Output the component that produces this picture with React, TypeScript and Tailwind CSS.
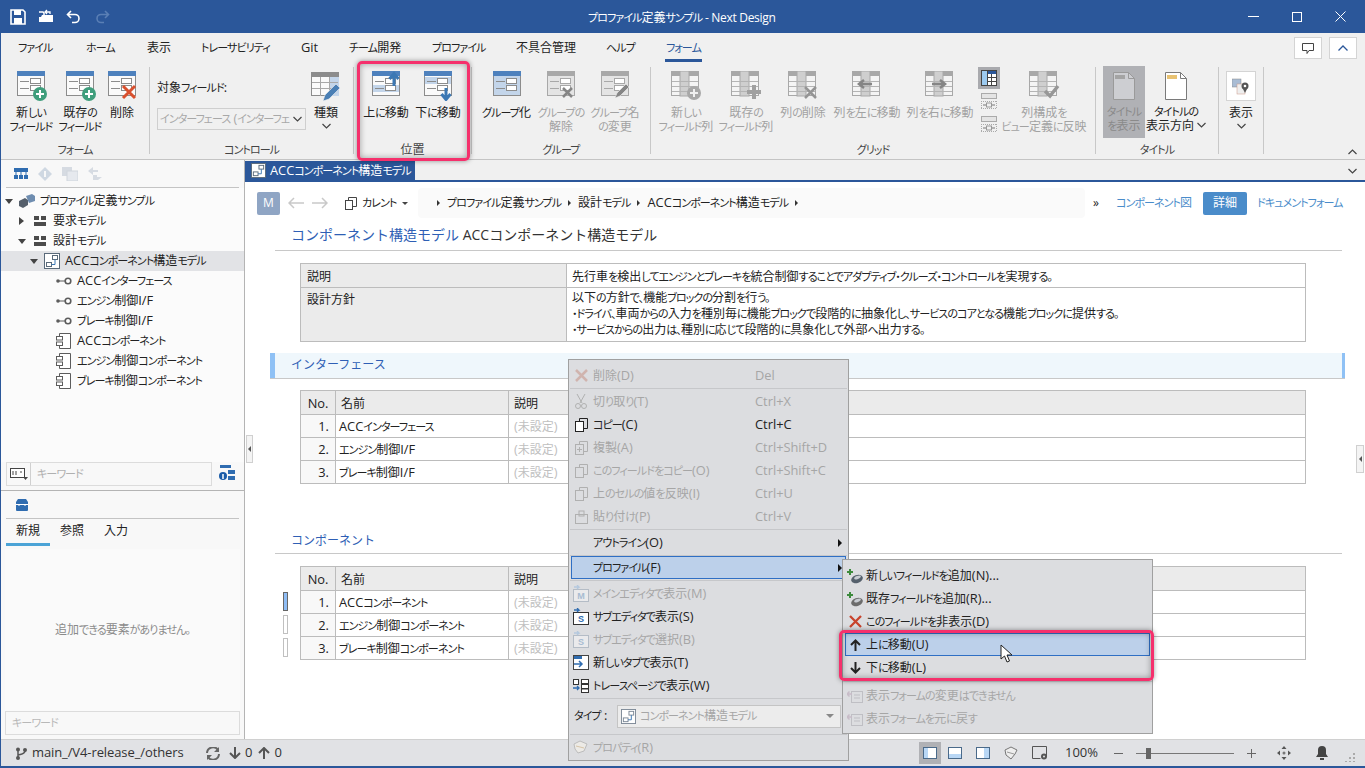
import type { ReactNode } from "react";

const GRAY = "#9a9a9a";

// かな・英数字の幅を Meiryo UI に寄せる
function j(s: string): ReactNode {
  return s.split(/([\u3040-\u30ff\u30fc・、。]+|[\x20-\x7e]+)/).map((part, i) => {
    if (!part) return null;
    if (/^[\x20-\x7e]+$/.test(part)) return <span key={i} className="[font-size:1.07em]">{part}</span>;
    if (/^[\u3040-\u30ff\u30fc・、。]+$/.test(part)) return <span key={i} className="[font-size:0.92em] tracking-[-0.085em]">{part}</span>;
    return <span key={i}>{part}</span>;
  });
}

function Form({ sel, off, head = "#4e81bd", children, band }: { sel?: boolean; off?: boolean; head?: string; children?: ReactNode; band?: "top" | "bottom" }) {
  const line = off ? "#a8a8a8" : "#8c8c8c";
  const fill = off ? "#e4e4e4" : sel ? "#c3d5ea" : "#fafafa";
  return (
    <svg width="32" height="30" viewBox="0 0 32 30">
      <rect x="2.5" y="0.5" width="27" height="24" fill={fill} stroke={line} />
      <rect x="2" y="0" width="28" height="5" fill={off ? "#a8a8a8" : head} />
      {band === "top" && <rect x="3" y="6" width="26" height="7" fill="#c3d5ea" />}
      {band === "bottom" && <rect x="3" y="14" width="26" height="7" fill="#c3d5ea" />}
      <path d="M5 10.5h9M5 17.5h9" stroke={line} />
      <rect x="15.5" y="7.5" width="10" height="5" fill="#fff" stroke={line} />
      <rect x="15.5" y="14.5" width="10" height="5" fill="#fff" stroke={line} />
      {children}
    </svg>
  );
}

const GreenPlus = () => (
  <g>
    <circle cx="25" cy="23" r="7" fill="#3f9e7c" />
    <path d="M25 19v8M21 23h8" stroke="#fff" strokeWidth="2" />
  </g>
);
const RedX = () => <path d="M17 15l12 12M29 15L17 27" stroke="#d9502e" strokeWidth="3" />;
const GrayX = () => <path d="M18 17l9 9M27 17l-9 9" stroke="#858585" strokeWidth="2.5" />;
const Pencil = ({ c = "#4a7fb5" }: { c?: string }) => <path d="M16 27l2-5 9-9 3 3-9 9z" fill={c} stroke="#f0f0f0" strokeWidth="0.6" />;

function Grid({ children, w = 32 }: { children?: ReactNode; w?: number }) {
  return (
    <svg width={w} height="30" viewBox="0 0 32 30">
      <rect x="1.5" y="0.5" width="27" height="24" fill="#f4f4f4" stroke="#a8a8a8" />
      <rect x="1" y="0" width="28" height="5" fill="#a8a8a8" />
      <rect x="10" y="0" width="9" height="25" fill="#cfcfcf" stroke="#a8a8a8" />
      <path d="M2 10.5h26M2 15.5h26M2 20.5h26" stroke="#b4b4b4" />
      {children}
    </svg>
  );
}

function TypeIcon() {
  return (
    <svg width="32" height="32" viewBox="0 0 32 32">
      <rect x="1.5" y="1.5" width="27" height="23" fill="#fafafa" stroke="#8c8c8c" />
      <rect x="1" y="1" width="28" height="5" fill="#8c8c8c" />
      <rect x="19" y="6" width="10" height="19" fill="#c3d5ea" />
      <path d="M2 11.5h26M2 17.5h26M10.5 6v19M19.5 6v19" stroke="#a8a8a8" />
      <path d="M13 30l2-6 11-11 4 4-11 11z" fill="#4a7fb5" stroke="#f0f0f0" strokeWidth="0.6" />
    </svg>
  );
}

function Page({ shown }: { shown?: boolean }) {
  return (
    <svg width="26" height="30" viewBox="0 0 26 30">
      <path d="M2.5 1.5h15l6 6v21h-21z" fill={shown ? "#cdced2" : "#fff"} stroke={shown ? GRAY : "#7a7a7a"} />
      <path d="M17.5 1.5v6h6" fill="none" stroke={shown ? GRAY : "#7a7a7a"} />
      <rect x="4" y="4" width="10" height="4" fill={shown ? "#a4a4a4" : "#e8c272"} />
    </svg>
  );
}

function Model({ size = 16, c = "#5a6a7a" }: { size?: number; c?: string }) {
  return (
    <svg className="shrink-0" width={size} height={size} viewBox="0 0 16 16">
      <rect x="0.5" y="0.5" width="15" height="15" fill="#fff" stroke={c} />
      <rect x="8.5" y="2.5" width="5" height="4" fill="none" stroke={c} />
      <rect x="2.5" y="9.5" width="5" height="4" fill="none" stroke={c} />
      <path d="M11 6.5v5H7.5" fill="none" stroke="#3c78b4" />
    </svg>
  );
}

function Folder() {
  return (
    <svg width="12" height="10" viewBox="0 0 12 10">
      <rect x="0" y="0" width="5" height="4" fill="#4b4b4b" />
      <rect x="7" y="0" width="5" height="4" fill="#4b4b4b" />
      <rect x="0" y="6" width="12" height="4" fill="#4b4b4b" />
    </svg>
  );
}

function Iface() {
  return (
    <svg width="16" height="8" viewBox="0 0 16 8">
      <circle cx="2" cy="4" r="1.8" fill="#5c5c5c" />
      <path d="M3 4h6" stroke="#5c5c5c" />
      <circle cx="12" cy="4" r="2.8" fill="#fff" stroke="#5c5c5c" strokeWidth="1.6" />
    </svg>
  );
}

function Comp() {
  return (
    <svg width="16" height="16" viewBox="0 0 16 16">
      <path d="M3.5 3.5v-3h11v15h-11v-3" fill="#fff" stroke="#5c5c5c" />
      <rect x="0.5" y="3.5" width="6" height="3.5" fill="#fff" stroke="#5c5c5c" />
      <rect x="0.5" y="9" width="6" height="3.5" fill="#fff" stroke="#5c5c5c" />
    </svg>
  );
}

function Caret({ open }: { open?: boolean }) {
  return open ? (
    <svg width="8" height="5" viewBox="0 0 8 5"><path d="M0 0h8L4 5z" fill="#444" /></svg>
  ) : (
    <svg width="5" height="8" viewBox="0 0 5 8"><path d="M0 0v8l5-4z" fill="#444" /></svg>
  );
}

const Chevron = ({ up }: { up?: boolean }) => (
  <svg width="9" height="6" viewBox="0 0 9 6">
    <path d={up ? "M0.5 5L4.5 1l4 4" : "M0.5 1l4 4 4-4"} fill="none" stroke="#444" strokeWidth="1.2" />
  </svg>
);

function RibbonButton({ icon, lines, w, off, chevron }: { icon: ReactNode; lines: string[]; w: string; off?: boolean; chevron?: boolean }) {
  return (
    <div className={`${w} flex flex-col items-center shrink-0 whitespace-nowrap ${off ? "text-[#a2a2a2]" : "text-[#222]"}`}>
      <div className="h-[35px] flex items-start justify-center">{icon}</div>
      {lines.map((l) => (
        <div key={l} className="leading-[13.5px]">{j(l)}</div>
      ))}
      {chevron && <div className="mt-[3px] leading-none"><Chevron /></div>}
    </div>
  );
}

function Group({ w, label, children }: { w: string; label: string; children: ReactNode }) {
  return (
    <div className={`${w} mt-[5px] h-[87px] flex flex-col shrink-0 border-r border-[#c8c8c8]`}>
      <div className="flex-1 flex">{children}</div>
      <div className="h-[14px] leading-[20px] text-center text-[#444]">{j(label)}</div>
    </div>
  );
}

function Ribbon() {
  return (
    <div className="h-[97px] flex border-b border-[#c4c4c4] box-content relative">
      <Group w="w-[149px]" label="フォーム">
        <div className="flex pl-[5px] pt-[4px]">
          <RibbonButton w="w-[50px]" lines={["新しい", "フィールド"]} icon={<Form><GreenPlus /></Form>} />
          <RibbonButton w="w-[48px]" lines={["既存の", "フィールド"]} icon={<Form><GreenPlus /></Form>} />
          <RibbonButton w="w-[36px]" lines={["削除"]} icon={<Form><RedX /></Form>} />
        </div>
      </Group>
      <Group w="w-[204px]" label="コントロール">
        <div className="flex pl-[7px] pt-[4px]">
          <div className="w-[149px] shrink-0">
            <div className="mt-[9px] leading-[14px] text-[#222]">{j("対象フィールド:")}</div>
            <div className="mt-[13px] h-[22px] w-[149px] border border-[#cfcfcf] flex items-center justify-between pl-[2px] pr-[3px] text-[#a8a8a8] whitespace-nowrap overflow-hidden">
              <span className="tracking-[-0.2px]">{j("インターフェース (インターフェ")}</span>
              <span className="shrink-0"><Chevron /></span>
            </div>
          </div>
          <RibbonButton w="w-[40px]" lines={["種類"]} chevron icon={<TypeIcon />} />
        </div>
      </Group>
      <Group w="w-[118px]" label="位置">
        <div className="flex pl-[6px] pt-[4px]">
          <RibbonButton w="w-[52px]" lines={["上に移動"]} icon={
            <Form band="bottom"><path d="M24 15V5M19.5 8L24 2.5 28.5 8" fill="none" stroke="#3c78b4" strokeWidth="3" /></Form>} />
          <RibbonButton w="w-[52px]" lines={["下に移動"]} icon={
            <Form band="top"><path d="M24 17v10M19.5 23l4.500 5.500 4.500-5.500" fill="none" stroke="#3c78b4" strokeWidth="3" /></Form>} />
        </div>
      </Group>
      <Group w="w-[179px]" label="グループ">
        <div className="flex pl-[7px] pt-[4px]">
          <RibbonButton w="w-[55px]" lines={["グループ化"]} icon={<Form sel />} />
          <RibbonButton w="w-[54px]" off lines={["グループの", "解除"]} icon={<Form off><GrayX /></Form>} />
          <RibbonButton w="w-[54px]" off lines={["グループ名", "の変更"]} icon={<Form off><Pencil c="#858585" /></Form>} />
        </div>
      </Group>
      <Group w="w-[445px]" label="グリッド">
        <div className="flex pl-[5px] pt-[4px]">
          <RibbonButton w="w-[60px]" off lines={["新しい", "フィールド列"]} icon={
            <Grid><circle cx="24" cy="22" r="7" fill="#a8a8a8" /><path d="M24 18v8M20 22h8" stroke="#f0f0f0" strokeWidth="2" /></Grid>} />
          <RibbonButton w="w-[60px]" off lines={["既存の", "フィールド列"]} icon={
            <Grid><path d="M24 14v14M17 21h14" stroke="#a0a0a0" strokeWidth="4" /></Grid>} />
          <RibbonButton w="w-[54px]" off lines={["列の削除"]} icon={<Grid><path d="M18 16l11 11M29 16L18 27" stroke="#959595" strokeWidth="2.5" /></Grid>} />
          <RibbonButton w="w-[74px]" off lines={["列を左に移動"]} icon={<Grid><path d="M21 13H9M13 9l-5 4 5 4" fill="none" stroke="#858585" strokeWidth="2.5" /></Grid>} />
          <RibbonButton w="w-[72px]" off lines={["列を右に移動"]} icon={<Grid><path d="M8 13h12M16 9l5 4-5 4" fill="none" stroke="#858585" strokeWidth="2.5" /></Grid>} />
          <div className="w-[26px] shrink-0 flex flex-col items-center">
            <div className="bg-[#a9aaae] w-[22px] h-[22px] -mt-[4px] flex items-center justify-center">
              <svg width="16" height="16" viewBox="0 0 16 16">
                <rect x="0.500" y="0.500" width="15" height="15" fill="#fff" stroke="#444" />
                <rect x="1" y="1" width="5" height="14" fill="#9ccaf0" />
                <rect x="6" y="1" width="9" height="3" fill="#2b579a" />
                <path d="M6.500 1v14M10.500 4v11M6 7.500h9M6 11.500h9" stroke="#444" />
              </svg>
            </div>
            {[0, 1].map((i) => (
              <svg key={i} className="mt-[4px] mb-[2px]" width="16" height="17" viewBox="0 0 16 17">
                <rect x="0.500" y="0.500" width="15" height="5" fill="#e4e4e4" stroke="#aaa" />
                <path d="M0.500 8v8M15.500 8v8M0 8.500h16M0 15.500h16" stroke="#aaa" strokeDasharray="1 1" />
                <rect x="5.500" y="10" width="5" height="4" fill="none" stroke="#999" />
                <path d="M2 12h3M11 12h3" stroke="#777" />
              </svg>
            ))}
          </div>
          <RibbonButton w="w-[84px]" off lines={["列構成を", "ビュー定義に反映"]} icon={
            <Grid><path d="M17 20l5 5 8-10" fill="none" stroke="#979797" strokeWidth="3.500" /></Grid>} />
        </div>
      </Group>
      <Group w="w-[123px]" label="タイトル">
        <div className="flex pl-[7px] -mt-[1px]">
          <div className="w-[42px] h-[72px] bg-[#b0b1b5] flex flex-col items-center shrink-0 text-[#8a8a8a] whitespace-nowrap">
            <div className="h-[39px] pt-[5px]"><Page shown /></div>
            <div className="leading-[13.5px]">{j("タイトル")}</div>
            <div className="leading-[13.5px]">{j("を表示")}</div>
          </div>
          <div className="w-[62px] flex flex-col items-center shrink-0 text-[#222] whitespace-nowrap">
            <div className="h-[39px] pt-[5px]"><Page /></div>
            <div className="leading-[13.5px]">{j("タイトルの")}</div>
            <div className="leading-[13.5px] flex items-center gap-[3px]">{j("表示方向")} <Chevron /></div>
          </div>
        </div>
      </Group>
      <Group w="w-[45px]" label="">
        <div className="flex flex-col items-center w-full pt-[4px] text-[#222]">
          <div className="w-[30px] h-[30px] bg-white border border-[#d4d4d4] flex items-center justify-center">
            <svg width="18" height="18" viewBox="0 0 18 18">
              <rect x="0" y="2" width="9" height="8" fill="#a9bcd4" stroke="#888" strokeWidth="0.500" />
              <rect x="5" y="7" width="8" height="10" fill="#eee" stroke="#c98" strokeWidth="0.500" />
              <circle cx="13" cy="9" r="3.500" fill="#555" />
              <circle cx="13" cy="9" r="1.300" fill="#fff" />
              <path d="M11 12l2 4 2-4z" fill="#555" />
            </svg>
          </div>
          <div className="mt-[5px] leading-[13.5px]">{j("表示")}</div>
          <div className="mt-[3px] leading-none"><Chevron /></div>
        </div>
      </Group>
      <div className="ml-auto mr-[8px] self-end mb-[4px]"><Chevron up /></div>
    </div>
  );
}

const tabs = [
  { t: "ファイル", w: "w-[68px]" },
  { t: "ホーム", w: "w-[61px]" },
  { t: "表示", w: "w-[54px]" },
  { t: "トレーサビリティ", w: "w-[100px]" },
  { t: "Git", w: "w-[48px]" },
  { t: "チーム開発", w: "w-[83px]" },
  { t: "プロファイル", w: "w-[84px]" },
  { t: "不具合管理", w: "w-[90px]" },
  { t: "ヘルプ", w: "w-[59px]" },
];

function TabRow() {
  return (
    <div className="h-[29px] flex justify-between pl-[17px] pr-[8px]">
      <div className="flex text-[#222]">
        {tabs.map(({ t, w }) => (
          <div key={t} className={`${w} leading-[29px] whitespace-nowrap`}>{j(t)}</div>
        ))}
        <div className="h-[29px] leading-[29px] border-b-[3px] border-[#2b579a] text-[#2b579a] px-[1px]">{j("フォーム")}</div>
      </div>
      <div className="flex gap-[7px] pt-[4px]">
        <div className="w-[28px] h-[22px] bg-white border border-[#d4d4d4] flex items-center justify-center">
          <svg width="14" height="13" viewBox="0 0 14 13"><path d="M1.500 1.500h11v7H8l-2 3v-3H1.500z" fill="none" stroke="#444" /></svg>
        </div>
        <div className="w-[28px] h-[22px] bg-white border border-[#d4d4d4] flex items-center justify-center">
          <svg width="10" height="6" viewBox="0 0 10 6"><path d="M0.500 5.500L5 1l4.500 4.500" fill="none" stroke="#2b579a" strokeWidth="1.300" /></svg>
        </div>
      </div>
    </div>
  );
}

function TitleBar() {
  return (
    <div className="h-[33px] bg-[#2b579a] flex items-center justify-between text-white relative shrink-0">
      <div className="flex items-center gap-[12px] pl-[9px]">
        <svg width="16" height="16" viewBox="0 0 16 16">
          <path d="M1 1h12l2 2v12H1z" fill="none" stroke="#fff" strokeWidth="1.600" />
          <rect x="4" y="1" width="7" height="5" fill="#fff" />
          <rect x="4" y="9" width="8" height="6" fill="#fff" />
        </svg>
        <svg width="16" height="16" viewBox="0 0 16 16">
          <path d="M1 8h2l1-2h11v7H1z" fill="#fff" />
          <path d="M1 3h4l1 1v3" fill="none" stroke="#fff" strokeWidth="1.500" />
          <path d="M9 1l-2 2 2 2M7 3h5v2" fill="none" stroke="#fff" strokeWidth="1.300" />
        </svg>
        <svg width="16" height="14" viewBox="0 0 16 14">
          <path d="M5 1L1.500 4.500 5 8M2 4.500h7a4 4 0 0 1 0 8H6" fill="none" stroke="#fff" strokeWidth="1.600" />
        </svg>
        <svg width="16" height="14" viewBox="0 0 16 14">
          <path d="M11 1l3.500 3.500L11 8M14 4.500H7a4 4 0 0 0 0 8h3" fill="none" stroke="#5a7fb5" strokeWidth="1.600" />
        </svg>
      </div>
      <div className="absolute left-[587px] top-0 leading-[35px] whitespace-nowrap">
        {j("プロファイル定義サンプル")}<span className="tracking-[-0.3px]"> - Next Design</span>
      </div>
      <div className="flex items-center gap-[33px] pr-[19px]">
        <div className="w-[11px] h-[1px] bg-white" />
        <div className="w-[10px] h-[10px] border border-white" />
        <svg width="11" height="11" viewBox="0 0 11 11"><path d="M0.500 0.500l10 10M10.500 0.500l-10 10" stroke="#fff" /></svg>
      </div>
    </div>
  );
}

function TreeRow({ pad, icon, caret, label, sel }: { pad: string; icon: ReactNode; caret?: "open" | "closed"; label: string; sel?: boolean }) {
  return (
    <div className={`h-[20px] flex items-center whitespace-nowrap text-[#222] ${pad} ${sel ? "bg-[#e2e3e6]" : ""}`}>
      <div className="w-[13px] shrink-0 flex justify-center">{caret && <Caret open={caret === "open"} />}</div>
      <div className="w-[24px] shrink-0 flex justify-center">{icon}</div>
      <span className="pl-[1px]">{j(label)}</span>
    </div>
  );
}

function LeftPanel() {
  return (
    <div className="w-[244px] shrink-0 border-r border-[#b4b4b4] bg-[#f8f8f8] flex flex-col">
      <div className="h-[28px] mx-[5px] border-b border-[#c4c4c4] flex items-center gap-[10px] pl-[8px]">
        <svg width="14" height="12" viewBox="0 0 14 12">
          <rect x="0" y="0" width="14" height="4" fill="#2f6cb0" /><path d="M2 4v3M7 4v3M12 4v3" stroke="#2f6cb0" /><rect x="0" y="7" width="4" height="4" fill="#2f6cb0" /><rect x="5" y="7" width="4" height="4" fill="#2f6cb0" /><rect x="10" y="7" width="4" height="4" fill="#2f6cb0" />
        </svg>
        <svg width="14" height="14" viewBox="0 0 14 14"><path d="M7 0l7 7-7 7-7-7z" fill="#cfd8e2" /><path d="M6 4h2v6H6z" fill="#f8f8f8" /></svg>
        <svg width="16" height="14" viewBox="0 0 16 14"><rect x="0" y="0" width="10" height="9" fill="#d6dbe2" /><rect x="5" y="4" width="11" height="10" fill="#e6e9ee" stroke="#cfd5dc" /></svg>
        <svg width="14" height="14" viewBox="0 0 14 14"><path d="M0 4l5-4v3h5v2H5v3zM14 10H9V8H5v5h5z" fill="#d6dbe2" /></svg>
      </div>
      <div className="h-[274px] pt-[3px] bg-[#fbfbfb]">
        <TreeRow pad="pl-[1px]" caret="open" label="プロファイル定義サンプル" icon={
          <svg width="16" height="14" viewBox="0 0 16 14"><path d="M0 7l6-3 3 2v5l-5 3-4-2z" fill="#56606c" /><path d="M7 2l6-2 3 2v5l-6 2z" fill="#6f8db0" /></svg>} />
        <TreeRow pad="pl-[14px]" caret="closed" label="要求モデル" icon={<Folder />} />
        <TreeRow pad="pl-[14px]" caret="open" label="設計モデル" icon={<Folder />} />
        <TreeRow pad="pl-[26px]" caret="open" label="ACCコンポーネント構造モデル" sel icon={<Model />} />
        {["ACCインターフェース", "エンジン制御I/F", "ブレーキ制御I/F"].map((l) => (
          <TreeRow key={l} pad="pl-[38px]" label={l} icon={<Iface />} />
        ))}
        {["ACCコンポーネント", "エンジン制御コンポーネント", "ブレーキ制御コンポーネント"].map((l) => (
          <TreeRow key={l} pad="pl-[38px]" label={l} icon={<Comp />} />
        ))}
      </div>
      <div className="h-[28px] flex items-start pl-[5px] pr-[9px] border-b border-[#b4b4b4] box-content">
        <div className="w-[206px] h-[24px] border border-[#dcdcdc] flex items-center bg-[#f8f8f8]">
          <div className="w-[24px] h-full border-r border-[#d0d0d0] flex items-center justify-center">
            <svg width="18" height="12" viewBox="0 0 18 12"><rect x="0.500" y="0.500" width="14" height="9" fill="#fff" stroke="#444" /><path d="M3 3v4M6 3v4M10 4h2" stroke="#444" /><path d="M13 9h5l-2.500 3z" fill="#444" /></svg>
          </div>
          <span className="pl-[6px] text-[#b0b0b0]">{j("キーワード")}</span>
        </div>
        <div className="ml-[7px] mt-[3px]">
          <svg width="16" height="16" viewBox="0 0 16 16"><rect x="1" y="0" width="11" height="3" fill="#2f6cb0" /><rect x="9" y="5" width="7" height="4" fill="#2f6cb0" /><rect x="9" y="11" width="7" height="4" fill="#2f6cb0" /><circle cx="4" cy="11" r="4" fill="#1a5ca8" /><path d="M4 9v5" stroke="#fff" strokeWidth="1.500" /></svg>
        </div>
      </div>
      <div className="h-[28px] mx-[5px] border-b border-[#c4c4c4] flex items-center pl-[9px]">
        <svg width="14" height="13" viewBox="0 0 14 13"><path d="M1 4l2-3h8l2 3v8a1 1 0 0 1-1 1H2a1 1 0 0 1-1-1z" fill="#2f6cb0" /><path d="M1 6.500h12" stroke="#fff" /><path d="M4 6v2M10 6v2" stroke="#fff" /></svg>
      </div>
      <div className="h-[27px] flex pl-[5px] text-[#222]">
        <div className="w-[44px] text-center leading-[24px] border-b-[3px] border-[#4ba3d6]">新規</div>
        <div className="w-[44px] text-center leading-[24px]">参照</div>
        <div className="w-[44px] text-center leading-[24px]">入力</div>
      </div>
      <div className="h-[162px] mt-[3px] mx-[4px] bg-[#fafafa] flex items-center justify-center text-[#8a8a8a]">{j("追加できる要素がありません。")}</div>
      <div className="h-[24px] mx-[4px] border border-[#dcdcdc] flex items-center pl-[6px] text-[#b8b8b8]">{j("キーワード")}</div>
    </div>
  );
}

function FieldTable({ rows, markers }: { rows: string[]; markers?: boolean }) {
  return (
    <div className="relative mx-[55px] mt-[12px]">
      {markers && (
        <div className="absolute -left-[17px] top-[26px] flex flex-col gap-[4px]">
          <div className="w-[5px] h-[19px] bg-[#8fbdf5] border border-[#666]" />
          <div className="w-[5px] h-[19px] bg-white border border-[#c0c0c0]" />
          <div className="w-[5px] h-[19px] bg-white border border-[#c0c0c0]" />
        </div>
      )}
      <table className="w-[1006px] table-fixed border-collapse text-[#222]">
        <thead>
          <tr className="h-[24px] bg-[#ebebeb]">
            <th className="w-[35px] border border-[#bcbcbc] font-normal pt-[2px]">{j("No.")}</th>
            <th className="w-[173px] border border-[#bcbcbc] font-normal text-left pl-[5px] pt-[2px]">名前</th>
            <th className="border border-[#bcbcbc] font-normal text-left pl-[5px] pt-[2px]">説明</th>
          </tr>
        </thead>
        <tbody>
          {rows.map((r, i) => (
            <tr key={r} className="h-[23px]">
              <td className="border border-[#bcbcbc] text-right pr-[6px] pt-[2px] bg-[#f8f8f8]">{j(`${i + 1}.`)}</td>
              <td className="border border-[#bcbcbc] pl-[3px] pt-[2px] whitespace-nowrap">{j(r)}</td>
              <td className="border border-[#bcbcbc] pl-[5px] pt-[2px] text-[#c0c0c0]">{j("(未設定)")}</td>
            </tr>
          ))}
        </tbody>
      </table>
    </div>
  );
}

function MainArea() {
  return (
    <div className="flex-1 flex flex-col min-w-0">
      <div className="h-[20px] flex justify-between shrink-0 bg-[#f0f0f0]">
        <div className="w-[170px] mt-[1px] bg-[#2b579a] text-white flex items-center pl-[6px] gap-[4px] whitespace-nowrap">
          <Model size={15} />
          <span>{j("ACCコンポーネント構造モデル")}</span>
        </div>
        <div className="pr-[8px] pt-[8px]"><Chevron /></div>
      </div>
      <div className="h-[2px] bg-[#2b579a] shrink-0" />
      <div className="flex-1 bg-white flex flex-col">
        <div className="flex items-center h-[36px] mt-[3px] pl-[12px] text-[#222] whitespace-nowrap">
          <div className="w-[23px] h-[23px] rounded-[2px] bg-[#8fa5c4] text-white flex items-center justify-center">M</div>
          <svg className="ml-[8px]" width="16" height="12" viewBox="0 0 16 12"><path d="M6 1L1 6l5 5M1 6h15" fill="none" stroke="#c9c9c9" strokeWidth="1.500" /></svg>
          <svg className="ml-[8px]" width="16" height="12" viewBox="0 0 16 12"><path d="M10 1l5 5-5 5M15 6H0" fill="none" stroke="#c9c9c9" strokeWidth="1.500" /></svg>
          <svg className="ml-[17px]" width="12" height="13" viewBox="0 0 12 13"><rect x="0.500" y="3.500" width="7" height="9" fill="#fff" stroke="#444" /><path d="M3.500 3V0.500h8v9H8" fill="none" stroke="#444" /></svg>
          <span className="ml-[5px] w-[35px]">{j("カレント")}</span>
          <svg className="ml-[5px]" width="6" height="3" viewBox="0 0 6 3"><path d="M0 0h6L3 3z" fill="#444" /></svg>
          <div className="ml-[10px] w-[667px] h-[30px] rounded-[4px] bg-[#fafafa] flex items-center pl-[19px] gap-[7px]">
            {["プロファイル定義サンプル", "設計モデル", "ACCコンポーネント構造モデル", ""].map((t, i) => (
              <span key={i} className="flex items-center gap-[7px]">
                <svg width="3" height="6" viewBox="0 0 3 6"><path d="M0 0v6l3-3z" fill="#333" /></svg>
                <span>{j(t)}</span>
              </span>
            ))}
          </div>
          <span className="ml-[8px] w-[23px]">»</span>
          <span className="text-[#4a8cca] w-[87px]">{j("コンポーネント図")}</span>
          <div className="w-[44px] h-[23px] rounded-[2px] bg-[#4a8cca] text-white flex items-center justify-center">詳細</div>
          <span className="ml-[10px] text-[#4a8cca]">{j("ドキュメントフォーム")}</span>
        </div>
        <div className="ml-[30px] h-[30px] w-[1067px] border-b border-[#c8c8c8] text-[14px] leading-[28px] pl-[16px] text-[#333] whitespace-nowrap [font-feature-settings:normal]">
          <span className="text-[#2f5fb5]">コンポーネント構造モデル</span> ACCコンポーネント構造モデル
        </div>
        <table className="ml-[55px] mt-[12px] w-[1006px] table-fixed border-collapse text-[#222]">
          <tbody>
            <tr className="h-[24px]">
              <td className="w-[266px] border border-[#bcbcbc] bg-[#ebebeb] pl-[6px] pt-[2px]">説明</td>
              <td className="border border-[#bcbcbc] pl-[5px] pt-[2px]">{j("先行車を検出してエンジンとブレーキを統合制御することでアダプティブ・クルーズ・コントロールを実現する。")}</td>
            </tr>
            <tr className="h-[54px]">
              <td className="border border-[#bcbcbc] bg-[#ebebeb] pl-[6px] align-top pt-[3px]">設計方針</td>
              <td className="border border-[#bcbcbc] pl-[5px] pt-[2px] leading-[16px] align-top">
                <div>{j("以下の方針で、機能ブロックの分割を行う。")}</div>
                <div>{j("・ドライバ、車両からの入力を種別毎に機能ブロックで段階的に抽象化し、サービスのコアとなる機能ブロックに提供する。")}</div>
                <div>{j("・サービスからの出力は、種別に応じて段階的に具象化して外部へ出力する。")}</div>
              </td>
            </tr>
          </tbody>
        </table>
        <div className="ml-[25px] mt-[11px] w-[1075px] h-[25px] bg-[#eff7fc] border-l-[5px] border-r-[3px] border-[#8fc1f5] shadow-[0_1px_0_#c8c8c8] leading-[24px] pl-[16px] text-[#2f5fb5] [font-feature-settings:normal]">インターフェース</div>
        <FieldTable rows={["ACCインターフェース", "エンジン制御I/F", "ブレーキ制御I/F"]} />
        <div className="ml-[30px] mt-[42px] h-[28px] w-[1067px] border-b border-[#c8c8c8] leading-[30px] pl-[16px] text-[#2f5fb5] [font-feature-settings:normal]">コンポーネント</div>
        <FieldTable markers rows={["ACCコンポーネント", "エンジン制御コンポーネント", "ブレーキ制御コンポーネント"]} />
      </div>
    </div>
  );
}

function StatusBar() {
  return (
    <div className="h-[27px] shrink-0 bg-[#e1e2e5] border-t border-[#d0d0d0] flex items-center text-[#333] whitespace-nowrap relative">
      <svg className="ml-[14px]" width="12" height="13" viewBox="0 0 12 13"><circle cx="3" cy="2.500" r="2" fill="#555" /><circle cx="3" cy="11" r="2" fill="#555" /><circle cx="10" cy="3" r="2" fill="#555" /><path d="M3 3v8M10 4c0 3-4 3-7 4" fill="none" stroke="#555" strokeWidth="1.500" /></svg>
      <span className="ml-[5px] text-[13px] w-[174px] tracking-[-0.1px]">main_/V4-release_/others</span>
      <svg width="14" height="13" viewBox="0 0 14 13"><path d="M1 6a6 6 0 0 1 11-3M13 7A6 6 0 0 1 2 10" fill="none" stroke="#666" strokeWidth="2" /><path d="M13 0v5H8zM1 13V8h5z" fill="#666" /></svg>
      <svg className="ml-[9px]" width="12" height="12" viewBox="0 0 12 12"><path d="M6 0v10M1 6l5 5 5-5" fill="none" stroke="#555" strokeWidth="2" /></svg>
      <span className="ml-[4px] text-[13px]">0</span>
      <svg className="ml-[6px]" width="12" height="12" viewBox="0 0 12 12"><path d="M6 12V2M1 6l5-5 5 5" fill="none" stroke="#555" strokeWidth="2" /></svg>
      <span className="ml-[4px] text-[13px]">0</span>
      <div className="ml-auto flex items-center pr-[9px]">
        <div className="w-[22px] h-[22px] bg-[#b0b1b5] flex items-center justify-center">
          <svg width="14" height="12" viewBox="0 0 14 12"><rect x="0.500" y="0.500" width="13" height="11" fill="#fff" stroke="#4a6a8a" /><rect x="1" y="1" width="4" height="10" fill="#b9d7f5" /></svg>
        </div>
        <svg className="ml-[7px]" width="14" height="12" viewBox="0 0 14 12"><rect x="0.500" y="0.500" width="13" height="11" fill="#fff" stroke="#4a6a8a" /><rect x="1" y="7" width="12" height="4" fill="#b9d7f5" /></svg>
        <svg className="ml-[14px]" width="14" height="12" viewBox="0 0 14 12"><rect x="0.500" y="0.500" width="13" height="11" fill="#fff" stroke="#4a6a8a" /><rect x="8" y="1" width="5" height="10" fill="#b9d7f5" /></svg>
        <svg className="ml-[13px]" width="16" height="16" viewBox="0 0 16 16"><path d="M2 5l6-3 6 3-2 4-4 5-5-4z" fill="#eee" stroke="#777" /><path d="M4 7l7 2" stroke="#999" /></svg>
        <svg className="ml-[13px]" width="16" height="14" viewBox="0 0 16 14"><path d="M0.500 0.500h14v10M0.500 0.500v12h8" fill="none" stroke="#555" /><circle cx="12" cy="10.500" r="3" fill="#555" /><circle cx="12" cy="10.500" r="1" fill="#e1e2e5" /></svg>
        <span className="ml-[17px] w-[42px] text-[13px]">100%</span>
        <div className="w-[9px] h-[1px] bg-[#666] ml-[7px]" />
        <div className="ml-[13px] w-[98px] h-[1px] bg-[#777] relative">
          <div className="absolute left-[10px] -top-[5px] w-[5px] h-[11px] bg-[#666]" />
        </div>
        <svg className="ml-[13px]" width="9" height="9" viewBox="0 0 9 9"><path d="M4.500 0v9M0 4.500h9" stroke="#666" /></svg>
        <svg className="ml-[21px]" width="14" height="14" viewBox="0 0 14 14"><path d="M7 0l2.500 3h-5zM7 14l-2.500-3h5zM0 7l3-2.500v5zM14 7l-3 2.500v-5z" fill="#555" /><circle cx="7" cy="7" r="1.500" fill="#777" /></svg>
        <svg className="ml-[25px]" width="12" height="14" viewBox="0 0 12 14"><path d="M6 0a4 4 0 0 1 4 4v4l2 3H0l2-3V4a4 4 0 0 1 4-4z" fill="#444" /><rect x="4" y="12" width="4" height="2" fill="#444" /></svg>
        <svg className="ml-[16px] mt-[8px]" width="12" height="10" viewBox="0 0 12 10"><path d="M9 1h2v2H9zM5 5h2v2H5zM9 5h2v2H9zM1 9h2v1H1zM5 9h2v1H5zM9 9h2v1H9z" fill="#aaa" /></svg>
      </div>
    </div>
  );
}

function MenuRow({ icon, label, keys, off, arrow, active, labelPad = "pl-[22px]" }: { icon?: ReactNode; label: string; keys?: string; off?: boolean; arrow?: boolean; active?: boolean; labelPad?: string }) {
  return (
    <div className={`h-[23px] mx-[2px] flex items-center relative whitespace-nowrap ${off ? "text-[#a6a6a6]" : "text-[#222]"} ${active ? "bg-[#bcd0ea] outline-1 -outline-offset-1 outline-[#2f6fc4]" : ""}`}>
      {icon && <div className="absolute left-0 w-[20px] flex justify-center">{icon}</div>}
      <span className={`${labelPad} w-[184px]`}>{j(label)}</span>
      {keys && <span>{j(keys)}</span>}
      {arrow && <svg className="absolute right-[4px]" width="4" height="8" viewBox="0 0 4 8"><path d="M0 0v8l4-4z" fill="#111" /></svg>}
    </div>
  );
}

const MenuSep = ({ h = "h-[3px]" }: { h?: string }) => (
  <div className={`${h} flex items-center mx-[1px]`}><div className="w-full h-[1px] bg-[#c6c7ca]" /></div>
);

const Copy = ({ c = "#b0b0b0", plus }: { c?: string; plus?: boolean }) => (
  <svg width="13" height="14" viewBox="0 0 13 14">
    <rect x="0.500" y="3.500" width="8" height="10" fill={c === "#222" ? "#fff" : "none"} stroke={c} />
    <path d="M4.500 3V0.500h8v10H9" fill="none" stroke={c} />
    {plus && <path d="M4.500 6v5M2 8.500h5" stroke={c} />}
  </svg>
);

const Jump = ({ ch, off }: { ch: string; off?: boolean }) => (
  <svg width="18" height="17" viewBox="0 0 18 17">
    <rect x="1.500" y="4.500" width="15" height="12" fill="#fff" fillOpacity={off ? 0.4 : 1} stroke={off ? "#b4bcc6" : "#333"} />
    <path d="M2 2h5l-2-2M7 2L5 4" fill="none" stroke={off ? "#b4c8de" : "#2f6cb0"} strokeWidth="1.300" />
    <text x="9" y="14" fontSize="9" fontWeight="700" textAnchor="middle" fill={off ? "#a8bcd2" : "#2f6cb0"} fontFamily="'Liberation Sans',sans-serif">{ch}</text>
  </svg>
);

const Bolt = ({ tone = "#55606c" }: { tone?: string }) => (
  <svg width="18" height="16" viewBox="0 0 18 16">
    <path d="M4 1v6M1 4h6" stroke="#3c8a3c" strokeWidth="2" />
    <ellipse cx="11" cy="11" rx="6" ry="4" transform="rotate(-20 11 11)" fill={tone} />
    <ellipse cx="11.500" cy="9.500" rx="3.500" ry="1.500" transform="rotate(-20 11.500 9.500)" fill="#c8ccd2" />
  </svg>
);

const FormBack = () => (
  <svg width="16" height="14" viewBox="0 0 16 14">
    <rect x="4.500" y="2.500" width="11" height="11" fill="none" stroke="#bfbfc4" />
    <path d="M7 6h6M7 9h6" stroke="#bfbfc4" />
    <path d="M0 5h5M2.500 2.500L0 5l2.500 2.500" fill="none" stroke="#c8bcc8" strokeWidth="1.500" />
  </svg>
);

function ContextMenu() {
  return (
    <div className="absolute left-[567px] top-[359px] w-[281px] h-[402px] bg-[#dcdde0] border border-[#a0a0a0] pt-[4px]">
      <MenuRow off label="削除(D)" keys="Del" icon={<svg width="13" height="13" viewBox="0 0 13 13"><path d="M1 1l11 11M12 1L1 12" stroke="#d0b4ae" strokeWidth="2.500" /></svg>} />
      <MenuSep />
      <MenuRow off label="切り取り(T)" keys="Ctrl+X" icon={<svg width="12" height="15" viewBox="0 0 12 15"><path d="M2 0l5 9M10 0L5 9" stroke="#b0b0b0" /><circle cx="3" cy="12" r="2.500" fill="none" stroke="#b0b0b0" /><circle cx="9" cy="12" r="2.500" fill="none" stroke="#b0b0b0" /></svg>} />
      <MenuRow label="コピー(C)" keys="Ctrl+C" icon={<Copy c="#222" />} />
      <MenuRow off label="複製(A)" keys="Ctrl+Shift+D" icon={<Copy plus />} />
      <MenuRow off label="このフィールドをコピー(O)" keys="Ctrl+Shift+C" icon={<Copy />} />
      <MenuRow off label="上のセルの値を反映(I)" keys="Ctrl+U" icon={<Copy />} />
      <MenuRow off label="貼り付け(P)" keys="Ctrl+V" icon={<svg width="13" height="14" viewBox="0 0 13 14"><rect x="0.500" y="4.500" width="12" height="9" fill="none" stroke="#b0b0b0" /><rect x="4" y="1" width="5" height="5" fill="none" stroke="#b0b0b0" /></svg>} />
      <MenuSep />
      <MenuRow label="アウトライン(O)" arrow />
      <MenuSep h="h-[2px]" />
      <MenuRow label="プロファイル(F)" arrow active />
      <MenuSep />
      <MenuRow off label="メインエディタで表示(M)" icon={<Jump ch="M" off />} />
      <MenuRow label="サブエディタで表示(S)" icon={<Jump ch="S" />} />
      <MenuRow off label="サブエディタで選択(B)" icon={<Jump ch="S" off />} />
      <MenuRow label="新しいタブで表示(T)" icon={
        <svg width="16" height="15" viewBox="0 0 16 15"><rect x="0.500" y="0.500" width="15" height="14" fill="#fff" stroke="#444" /><rect x="1" y="1" width="8" height="3" fill="#2f6cb0" /><path d="M1 9h8M6 6l3 3-3 3" fill="none" stroke="#2f6cb0" strokeWidth="1.500" /></svg>} />
      <MenuRow label="トレースページで表示(W)" icon={
        <svg width="16" height="14" viewBox="0 0 16 14"><rect x="0.500" y="0.500" width="5" height="5" fill="#fff" stroke="#333" /><rect x="8.500" y="0.500" width="7" height="4" fill="#fff" stroke="#333" /><rect x="8.500" y="5.500" width="7" height="4" fill="#fff" stroke="#333" /><rect x="8.500" y="10" width="7" height="3.500" fill="#fff" stroke="#333" /><path d="M0 9h6M4 7l2 2-2 2" fill="none" stroke="#2f6cb0" strokeWidth="1.300" /></svg>} />
      <MenuSep h="h-[2px]" />
      <div className="h-[34px] flex items-center pl-[5px] text-[#222]">
        <span className="w-[43px] whitespace-nowrap">{j("タイプ :")}</span>
        <div className="w-[224px] h-[23px] bg-[#ececec] border border-[#c4c4c4] flex items-center pl-[3px] text-[#a6a6a6] whitespace-nowrap">
          <Model size={15} c="#7c8896" />
          <span className="ml-[4px] flex-1">{j("コンポーネント構造モデル")}</span>
          <svg className="mr-[6px]" width="8" height="4" viewBox="0 0 8 4"><path d="M0 0h8L4 4z" fill="#888" /></svg>
        </div>
      </div>
      <MenuSep />
      <MenuRow off label="プロパティ(R)" icon={<svg width="16" height="15" viewBox="0 0 16 15"><path d="M1 4l6-3 7 3-3 7-6 2-3-4z" fill="#eceae6" stroke="#bcbcbc" /><path d="M3 6l8 2" stroke="#d6c4a8" /></svg>} />
    </div>
  );
}

function SubMenu() {
  return (
    <div className="absolute left-[841px] top-[559px] w-[311px] h-[175px] bg-[#dcdde0] border border-[#a0a0a0] pt-[4px]">
      <MenuRow label="新しいフィールドを追加(N)..." labelPad="pl-[21px]" icon={<Bolt />} />
      <MenuRow label="既存フィールドを追加(R)..." labelPad="pl-[21px]" icon={<Bolt tone="#6c6c6c" />} />
      <MenuRow label="このフィールドを非表示(D)" labelPad="pl-[21px]" icon={<svg width="13" height="13" viewBox="0 0 13 13"><path d="M1 1l11 11M12 1L1 12" stroke="#c8432c" strokeWidth="2.300" /></svg>} />
      <MenuRow label="上に移動(U)" labelPad="pl-[21px]" active icon={<svg width="11" height="12" viewBox="0 0 11 12"><path d="M5.500 12V2M1 6l4.500-4.500L10 6" fill="none" stroke="#222" strokeWidth="2" /></svg>} />
      <MenuRow label="下に移動(L)" labelPad="pl-[21px]" icon={<svg width="11" height="12" viewBox="0 0 11 12"><path d="M5.500 0v10M1 6l4.500 4.500L10 6" fill="none" stroke="#222" strokeWidth="2" /></svg>} />
      <div className="h-[5px] flex items-center"><div className="w-full h-[1px] bg-[#c6c7ca]" /></div>
      <MenuRow off label="表示フォームの変更はできません" labelPad="pl-[21px]" icon={<FormBack />} />
      <MenuRow off label="表示フォームを元に戻す" labelPad="pl-[21px]" icon={<FormBack />} />
    </div>
  );
}

export default function App() {
  return (
    <div className="w-[1365px] h-[768px] relative overflow-hidden bg-[#f0f0f0] border-l border-b-2 border-[#2b579a] flex flex-col text-[12px] [font-family:'Open_Sans','Noto_Sans_CJK_JP',sans-serif] [font-feature-settings:'palt','pkna']">
      <TitleBar />
      <TabRow />
      <Ribbon />
      <div className="flex-1 flex min-h-0">
        <LeftPanel />
        <MainArea />
      </div>
      <StatusBar />
      <ContextMenu />
      <SubMenu />
      {/* パネルの開閉つまみ */}
      <div className="absolute left-[245px] top-[435px] w-[7px] h-[28px] bg-[#f4f4f4] border border-[#d0d0d0] flex items-center justify-center">
        <svg width="3" height="6" viewBox="0 0 3 6"><path d="M3 0v6L0 3z" fill="#555" /></svg>
      </div>
      <div className="absolute left-[1355px] top-[445px] w-[8px] h-[28px] bg-[#f4f4f4] border border-[#d0d0d0] flex items-center justify-center">
        <svg width="3" height="6" viewBox="0 0 3 6"><path d="M3 0v6L0 3z" fill="#555" /></svg>
      </div>
      {/* 赤枠の注釈 */}
      <div className="absolute left-[356px] top-[61px] w-[113px] h-[100px] rounded-[5px] border-[3px] border-[#f5306c] shadow-[0_0_5px_rgba(0,0,0,0.4),inset_0_0_6px_rgba(0,0,0,0.35)]" />
      <div className="absolute left-[838px] top-[630px] w-[315px] h-[51px] rounded-[5px] border-[3px] border-[#f5306c] shadow-[0_0_5px_rgba(0,0,0,0.4),inset_0_0_6px_rgba(0,0,0,0.35)]" />
      <svg className="absolute left-[999px] top-[644px]" width="15" height="20" viewBox="0 0 15 20">
        <path d="M1 1v14l3.500-3 2.500 6 2.500-1-2.500-6H12z" fill="#fff" stroke="#222" />
      </svg>
    </div>
  );
}
